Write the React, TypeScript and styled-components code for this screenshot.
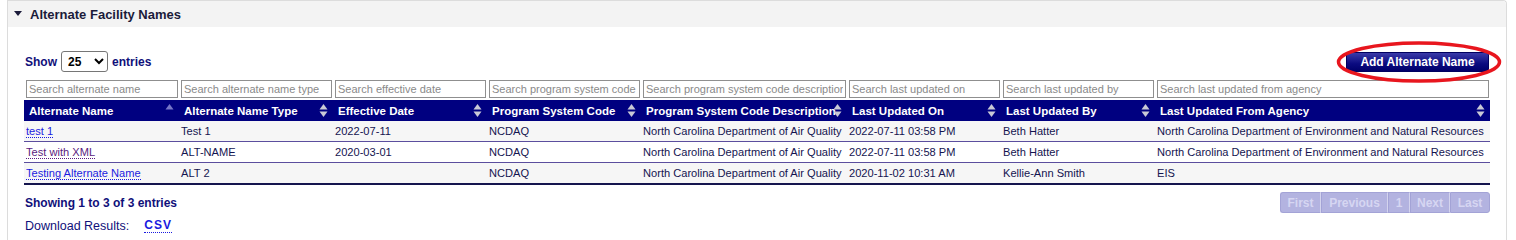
import * as React from 'react'
import styled, { createGlobalStyle } from 'styled-components'

const GlobalStyle = createGlobalStyle`
  body {
    margin: 0;
    background: #ffffff;
    font-family: 'Liberation Sans', Arial, sans-serif;
    font-size: 12px;
  }
`

interface Column {
  title: string
  filter: string
  width: number
}

const columns: Column[] = [
  { title: 'Alternate Name', filter: 'Search alternate name', width: 155 },
  { title: 'Alternate Name Type', filter: 'Search alternate name type', width: 154 },
  { title: 'Effective Date', filter: 'Search effective date', width: 154 },
  { title: 'Program System Code', filter: 'Search program system code', width: 154 },
  { title: 'Program System Code Description', filter: 'Search program system code description', width: 206 },
  { title: 'Last Updated On', filter: 'Search last updated on', width: 154 },
  { title: 'Last Updated By', filter: 'Search last updated by', width: 154 },
  { title: 'Last Updated From Agency', filter: 'Search last updated from agency', width: 335 },
]

const rows = [
  { name: 'test 1', visited: false, type: 'Test 1', date: '2022-07-11', code: 'NCDAQ', desc: 'North Carolina Department of Air Quality', on: '2022-07-11 03:58 PM', by: 'Beth Hatter', agency: 'North Carolina Department of Environment and Natural Resources' },
  { name: 'Test with XML', visited: true, type: 'ALT-NAME', date: '2020-03-01', code: 'NCDAQ', desc: 'North Carolina Department of Air Quality', on: '2022-07-11 03:58 PM', by: 'Beth Hatter', agency: 'North Carolina Department of Environment and Natural Resources' },
  { name: 'Testing Alternate Name', visited: false, type: 'ALT 2', date: '', code: 'NCDAQ', desc: 'North Carolina Department of Air Quality', on: '2020-11-02 10:31 AM', by: 'Kellie-Ann Smith', agency: 'EIS' },
]

const Panel = styled.section`
  width: 1500px;
  height: 250px;
  margin-left: 7px;
  box-sizing: border-box;
  border: 1px solid #dcdcdc;
  border-bottom: none;
  border-radius: 0 4px 0 0;
`

const PanelHeader = styled.div`
  height: 26px;
  display: flex;
  align-items: center;
  gap: 8px;
  padding-left: 6px;
  background: #f3f3f3;
  border-radius: 0 4px 0 0;
  color: #1b1b3a;
  font-size: 13px;
  font-weight: bold;
`

const Caret = styled.span`
  width: 0;
  height: 0;
  border-left: 4px solid transparent;
  border-right: 4px solid transparent;
  border-top: 5px solid #1b1b3a;
  margin-top: -2px;
`

const PanelBody = styled.div`
  padding: 24px 16px 0 16px;
`

const Toolbar = styled.div`
  position: relative;
  display: flex;
  justify-content: space-between;
  align-items: center;
  height: 21px;
  margin-bottom: 8px;
  padding-right: 1px;
`

const LengthLabel = styled.label`
  display: flex;
  align-items: center;
  gap: 4px;
  padding-left: 1px;
  color: #10107a;
  font-weight: bold;
`

const LengthSelect = styled.select`
  width: 47px;
  height: 21px;
  border: 1px solid #767676;
  border-radius: 3px;
  background: #fff;
  font-family: 'Liberation Sans', Arial, sans-serif;
  font-size: 12px;
  font-weight: bold;
  color: #000;
  padding-left: 2px;
`

const AddButton = styled.button`
  width: 143px;
  height: 20px;
  border: 1px solid #000060;
  border-radius: 3px;
  background: linear-gradient(#3a3aa8, #0b0b80 60%, #00006a);
  color: #fff;
  font-family: 'Liberation Sans', Arial, sans-serif;
  font-size: 12px;
  font-weight: bold;
  padding: 0;
`

const Highlight = styled.svg`
  position: absolute;
  right: -12px;
  top: -10px;
  pointer-events: none;
`

const Table = styled.table`
  width: 1466px;
  border-collapse: collapse;
  table-layout: fixed;
  font-size: 11.5px;
`

const FilterCell = styled.th`
  padding: 0 1px 2px 2px;
  height: 18px;
`

const FilterInput = styled.input`
  box-sizing: border-box;
  width: 100%;
  height: 18px;
  border: 1px solid #8f8f8f;
  padding: 0 2px;
  font-family: 'Liberation Sans', Arial, sans-serif;
  font-size: 11px;
  &::placeholder {
    color: #8a8a8a;
  }
`

const HeadCell = styled.th`
  position: relative;
  height: 21px;
  padding: 0 16px 0 5px;
  background: #000080;
  color: #fff;
  text-align: left;
  font-weight: bold;
  white-space: nowrap;
  overflow: hidden;
`

const SortIcon = styled.svg`
  position: absolute;
  right: 5px;
  top: 3px;
`

const BodyRow = styled.tr<{ $odd: boolean }>`
  background: ${props => (props.$odd ? '#f6f6f6' : '#ffffff')};
  border-bottom: 1px solid #5b4e9e;
  &:last-child {
    border-bottom: 2px solid #15154e;
  }
`

const Cell = styled.td`
  height: 20px;
  padding: 0 2px;
  color: #141450;
  font-size: 11.1px;
  white-space: nowrap;
  overflow: hidden;
`

const NameLink = styled.a<{ $visited: boolean }>`
  color: ${props => (props.$visited ? '#5a1a80' : '#1a1ae0')};
  text-decoration: none;
  border-bottom: 1px dotted ${props => (props.$visited ? '#5a1a80' : '#1a1ae0')};
`

const Footer = styled.div`
  display: flex;
  justify-content: space-between;
  align-items: center;
  margin-top: 7px;
  height: 21px;
`

const InfoText = styled.div`
  padding-left: 1px;
  color: #10107a;
  font-weight: bold;
`

const Pager = styled.div`
  display: flex;
`

const PageButton = styled.span<{ $w: number }>`
  box-sizing: border-box;
  width: ${props => props.$w}px;
  height: 21px;
  display: flex;
  align-items: center;
  justify-content: center;
  background: #b3b3e0;
  border: 1px solid #a3a3d6;
  border-right-color: #d4d4ee;
  color: #d6d6f2;
  font-weight: bold;
  &:first-child {
    border-radius: 3px 0 0 3px;
  }
  &:last-child {
    border-radius: 0 3px 3px 0;
    border-right-color: #a3a3d6;
  }
`

const Download = styled.div`
  margin-top: 5px;
  padding-left: 1px;
  color: #10107a;
  font-size: 12.5px;
  display: flex;
  gap: 15px;
  align-items: center;
`

const CsvLink = styled.a`
  color: #1a1ae0;
  font-weight: bold;
  font-size: 12px;
  letter-spacing: 1px;
  text-decoration: none;
  border-bottom: 1px dotted #1a1ae0;
`

const Sort = ({ only }: { only?: boolean }) => (
  <SortIcon width="9" height="15" viewBox="0 0 9 15">
    <polygon points="0.5,6.5 4.5,1 8.5,6.5" fill={only ? '#7777c8' : '#c9c9d6'} />
    {!only && <polygon points="0.5,8.5 4.5,14 8.5,8.5" fill="#c9c9d6" />}
  </SortIcon>
)

export default function App() {
  return (
    <>
      <GlobalStyle />
      <Panel>
        <PanelHeader>
          <Caret />
          Alternate Facility Names
        </PanelHeader>
        <PanelBody>
          <Toolbar>
            <LengthLabel>
              Show
              <LengthSelect defaultValue="25">
                <option>10</option>
                <option>25</option>
                <option>50</option>
                <option>100</option>
              </LengthSelect>
              entries
            </LengthLabel>
            <AddButton>Add Alternate Name</AddButton>
            <Highlight width="166" height="42" viewBox="0 0 166 42">
              <ellipse cx="83" cy="21" rx="80.5" ry="19" fill="none" stroke="#e8161e" strokeWidth="3.5" />
            </Highlight>
          </Toolbar>
          <Table>
            <colgroup>
              {columns.map(c => (
                <col key={c.title} style={{ width: c.width }} />
              ))}
            </colgroup>
            <thead>
              <tr>
                {columns.map(c => (
                  <FilterCell key={c.title}>
                    <FilterInput placeholder={c.filter} />
                  </FilterCell>
                ))}
              </tr>
              <tr>
                {columns.map((c, i) => (
                  <HeadCell key={c.title}>
                    {c.title}
                    <Sort only={i === 0} />
                  </HeadCell>
                ))}
              </tr>
            </thead>
            <tbody>
              {rows.map((r, i) => (
                <BodyRow key={r.name} $odd={i % 2 === 0}>
                  <Cell>
                    <NameLink href="#" $visited={r.visited}>{r.name}</NameLink>
                  </Cell>
                  <Cell>{r.type}</Cell>
                  <Cell>{r.date}</Cell>
                  <Cell>{r.code}</Cell>
                  <Cell>{r.desc}</Cell>
                  <Cell>{r.on}</Cell>
                  <Cell>{r.by}</Cell>
                  <Cell>{r.agency}</Cell>
                </BodyRow>
              ))}
            </tbody>
          </Table>
          <Footer>
            <InfoText>Showing 1 to 3 of 3 entries</InfoText>
            <Pager>
              <PageButton $w={41}>First</PageButton>
              <PageButton $w={67}>Previous</PageButton>
              <PageButton $w={22}>1</PageButton>
              <PageButton $w={40}>Next</PageButton>
              <PageButton $w={40}>Last</PageButton>
            </Pager>
          </Footer>
          <Download>
            Download Results:
            <CsvLink href="#">CSV</CsvLink>
          </Download>
        </PanelBody>
      </Panel>
    </>
  )
}
